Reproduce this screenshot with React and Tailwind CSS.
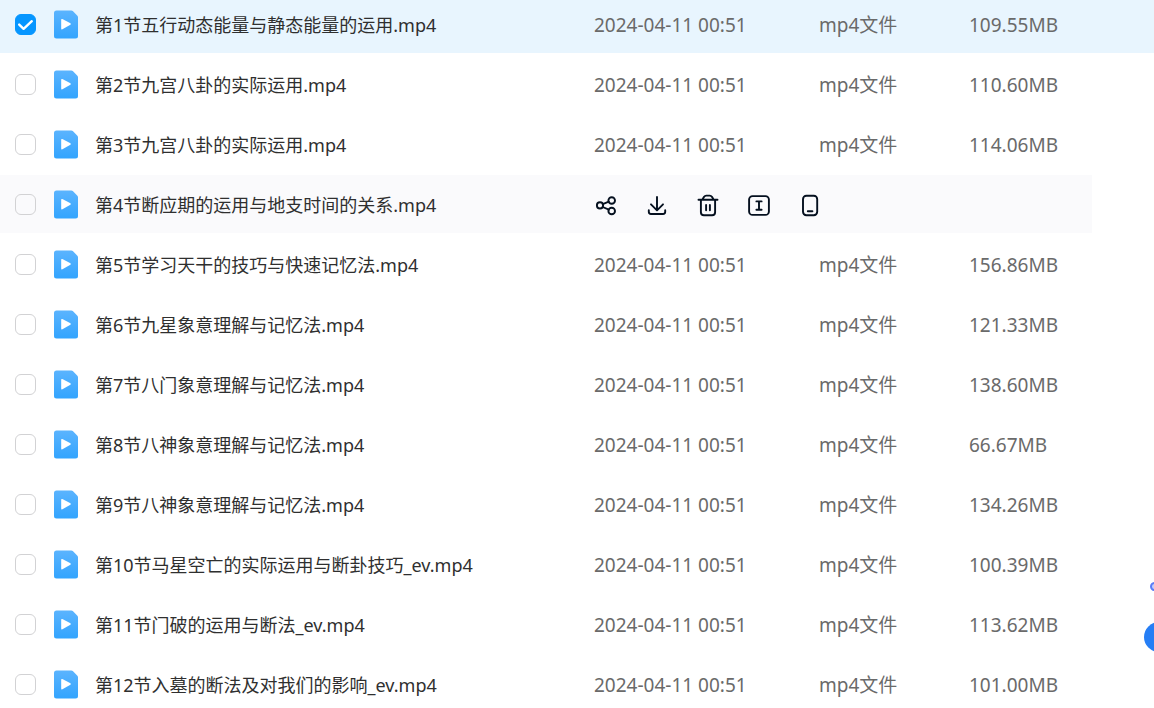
import React from "react";

const files = [
  { name: "第1节五行动态能量与静态能量的运用.mp4", size: "109.55MB", selected: true },
  { name: "第2节九宫八卦的实际运用.mp4", size: "110.60MB" },
  { name: "第3节九宫八卦的实际运用.mp4", size: "114.06MB" },
  { name: "第4节断应期的运用与地支时间的关系.mp4", size: "", active: true },
  { name: "第5节学习天干的技巧与快速记忆法.mp4", size: "156.86MB" },
  { name: "第6节九星象意理解与记忆法.mp4", size: "121.33MB" },
  { name: "第7节八门象意理解与记忆法.mp4", size: "138.60MB" },
  { name: "第8节八神象意理解与记忆法.mp4", size: "66.67MB" },
  { name: "第9节八神象意理解与记忆法.mp4", size: "134.26MB" },
  { name: "第10节马星空亡的实际运用与断卦技巧_ev.mp4", size: "100.39MB" },
  { name: "第11节门破的运用与断法_ev.mp4", size: "113.62MB" },
  { name: "第12节入墓的断法及对我们的影响_ev.mp4", size: "101.00MB" },
];

function VideoFileIcon() {
  return (
    <svg className="h-[29px] w-6 shrink-0" viewBox="0 0 24 29" aria-hidden="true">
      <defs>
        <linearGradient id="file-fill" x1="0" y1="0" x2="0" y2="1">
          <stop offset="0" stopColor="#5bb4fe" />
          <stop offset="1" stopColor="#33a4fe" />
        </linearGradient>
      </defs>
      <path
        d="M2.500 .5h14.800q.9 0 1.500.6l4.600 4.700q.6.600.6 1.400v18.800a2.500 2.500 0 0 1-2.500 2.500h-19A2.500 2.500 0 0 1 0 26V3A2.500 2.500 0 0 1 2.500.5z"
        fill="url(#file-fill)"
      />
      <path d="M7.200 9.800q0-1.300 1.200-.7l8 4.200q1.100.7 0 1.400l-8 4.500q-1.200.6-1.200-.7z" fill="#fff" />
    </svg>
  );
}

function Checkbox({ label, defaultChecked }) {
  return (
    <span className="relative flex h-[21px] w-[21px] shrink-0">
      <input
        type="checkbox"
        aria-label={label}
        defaultChecked={defaultChecked}
        className="peer h-full w-full cursor-pointer appearance-none rounded-[6px] border border-[#d2d2d4] bg-transparent checked:border-[#0696ff] checked:bg-[#0696ff]"
      />
      <svg
        className="pointer-events-none absolute inset-0 hidden h-full w-full peer-checked:block"
        viewBox="0 0 21 21"
        fill="none"
        stroke="#fff"
        strokeWidth="2.4"
        strokeLinecap="round"
        strokeLinejoin="round"
        aria-hidden="true"
      >
        <path d="M4.200 10.600l4.400 4.200L16.800 7.200" />
      </svg>
    </span>
  );
}

const actions = [
  {
    label: "分享",
    icon: (
      <>
        <circle cx="5" cy="12.400" r="3.100" />
        <circle cx="16.700" cy="7.500" r="3.300" />
        <circle cx="16.700" cy="18" r="3.300" />
        <path d="M7.800 11.100l6-2.400M7.700 14l6.100 2.700" />
      </>
    ),
  },
  {
    label: "下载",
    icon: (
      <path d="M11 4v13M5 11.300l6 6 6-6M2.800 17.200v1.600q0 2.200 2.200 2.200h12q2.200 0 2.200-2.200v-1.600" />
    ),
  },
  {
    label: "删除",
    icon: (
      <>
        <path d="M1.500 6.800h19M3.900 6.800v12.400q0 3 3 3h8.200q3 0 3-3V6.800M5.400 6.600l1.700-2.800q.8-1.200 2.100-1.200h3.600q1.300 0 2.100 1.200l1.700 2.800" />
        <path d="M9.100 12v5.200M12.900 12v5.200" />
      </>
    ),
  },
  {
    label: "重命名",
    icon: (
      <>
        <rect x="1.100" y="3.100" width="19.800" height="18.800" rx="3.500" />
        <path d="M8.400 8.400h5.200M8.400 16.800h5.200M11 8.400v8.400" />
      </>
    ),
  },
  {
    label: "发送到手机",
    icon: (
      <>
        <rect x="4" y="2.800" width="14.200" height="19.400" rx="3.400" />
        <path d="M8.800 18.300h4.600" />
      </>
    ),
  },
];

function RowActions() {
  return (
    <div className="flex gap-[29px] pl-px">
      {actions.map((action) => (
        <button key={action.label} type="button" aria-label={action.label} className="h-6 w-[22px] cursor-pointer">
          <svg
            className="h-6 w-[22px]"
            viewBox="0 0 22 24"
            fill="none"
            stroke="#05101f"
            strokeWidth="1.900"
            strokeLinecap="round"
            strokeLinejoin="round"
            aria-hidden="true"
          >
            {action.icon}
          </svg>
        </button>
      ))}
    </div>
  );
}

function FileRow({ file }) {
  const tint = file.active ? "bg-[#fafafc]" : "";
  return (
    <tr className={file.selected ? "h-[58px] bg-[#e8f5fe]" : "h-[58px]"}>
      <td className={`p-0 ${tint}`}>
        <div className="flex items-center pl-[15px]">
          <Checkbox label={file.name} defaultChecked={file.selected} />
          <span className="flex items-center gap-[17px] pl-[18px] whitespace-nowrap text-[#2f2f2f]">
            <VideoFileIcon />
            <span className="pt-0.5 text-[18px] leading-6">{file.name}</span>
          </span>
        </div>
      </td>
      {file.active ? (
        <td colSpan={3} className={`p-0 pt-0.5 ${tint}`}>
          <RowActions />
        </td>
      ) : (
        <>
          <td className="p-0 pt-0.5">2024-04-11 00:51</td>
          <td className="p-0 pt-0.5">mp4文件</td>
          <td className="p-0 pt-0.5">{file.size}</td>
        </>
      )}
      <td className="p-0"></td>
    </tr>
  );
}

export default function App() {
  return (
    <main className="relative h-screen overflow-hidden bg-white font-['Noto_Sans','Noto_Sans_CJK_SC',sans-serif]">
      <table className="-mt-[7px] w-full table-fixed border-separate border-spacing-x-0 border-spacing-y-[2px] text-[19px] leading-6 text-[#6a6a6a]">
        <colgroup>
          <col />
          <col className="w-[225px]" />
          <col className="w-[150px]" />
          <col className="w-[123px]" />
          <col className="w-[62px]" />
        </colgroup>
        <tbody>
          {files.map((file) => (
            <FileRow key={file.name} file={file} />
          ))}
        </tbody>
      </table>
      <div className="absolute -right-[5px] bottom-[117px] h-[9px] w-[9px] rounded-full border-2 border-[#5b7cf7] bg-[#c3cffd]"></div>
      <button
        type="button"
        aria-label="助手"
        className="absolute -right-5 bottom-14 h-[30px] w-[30px] rounded-full bg-[#267ef5]"
      ></button>
    </main>
  );
}
